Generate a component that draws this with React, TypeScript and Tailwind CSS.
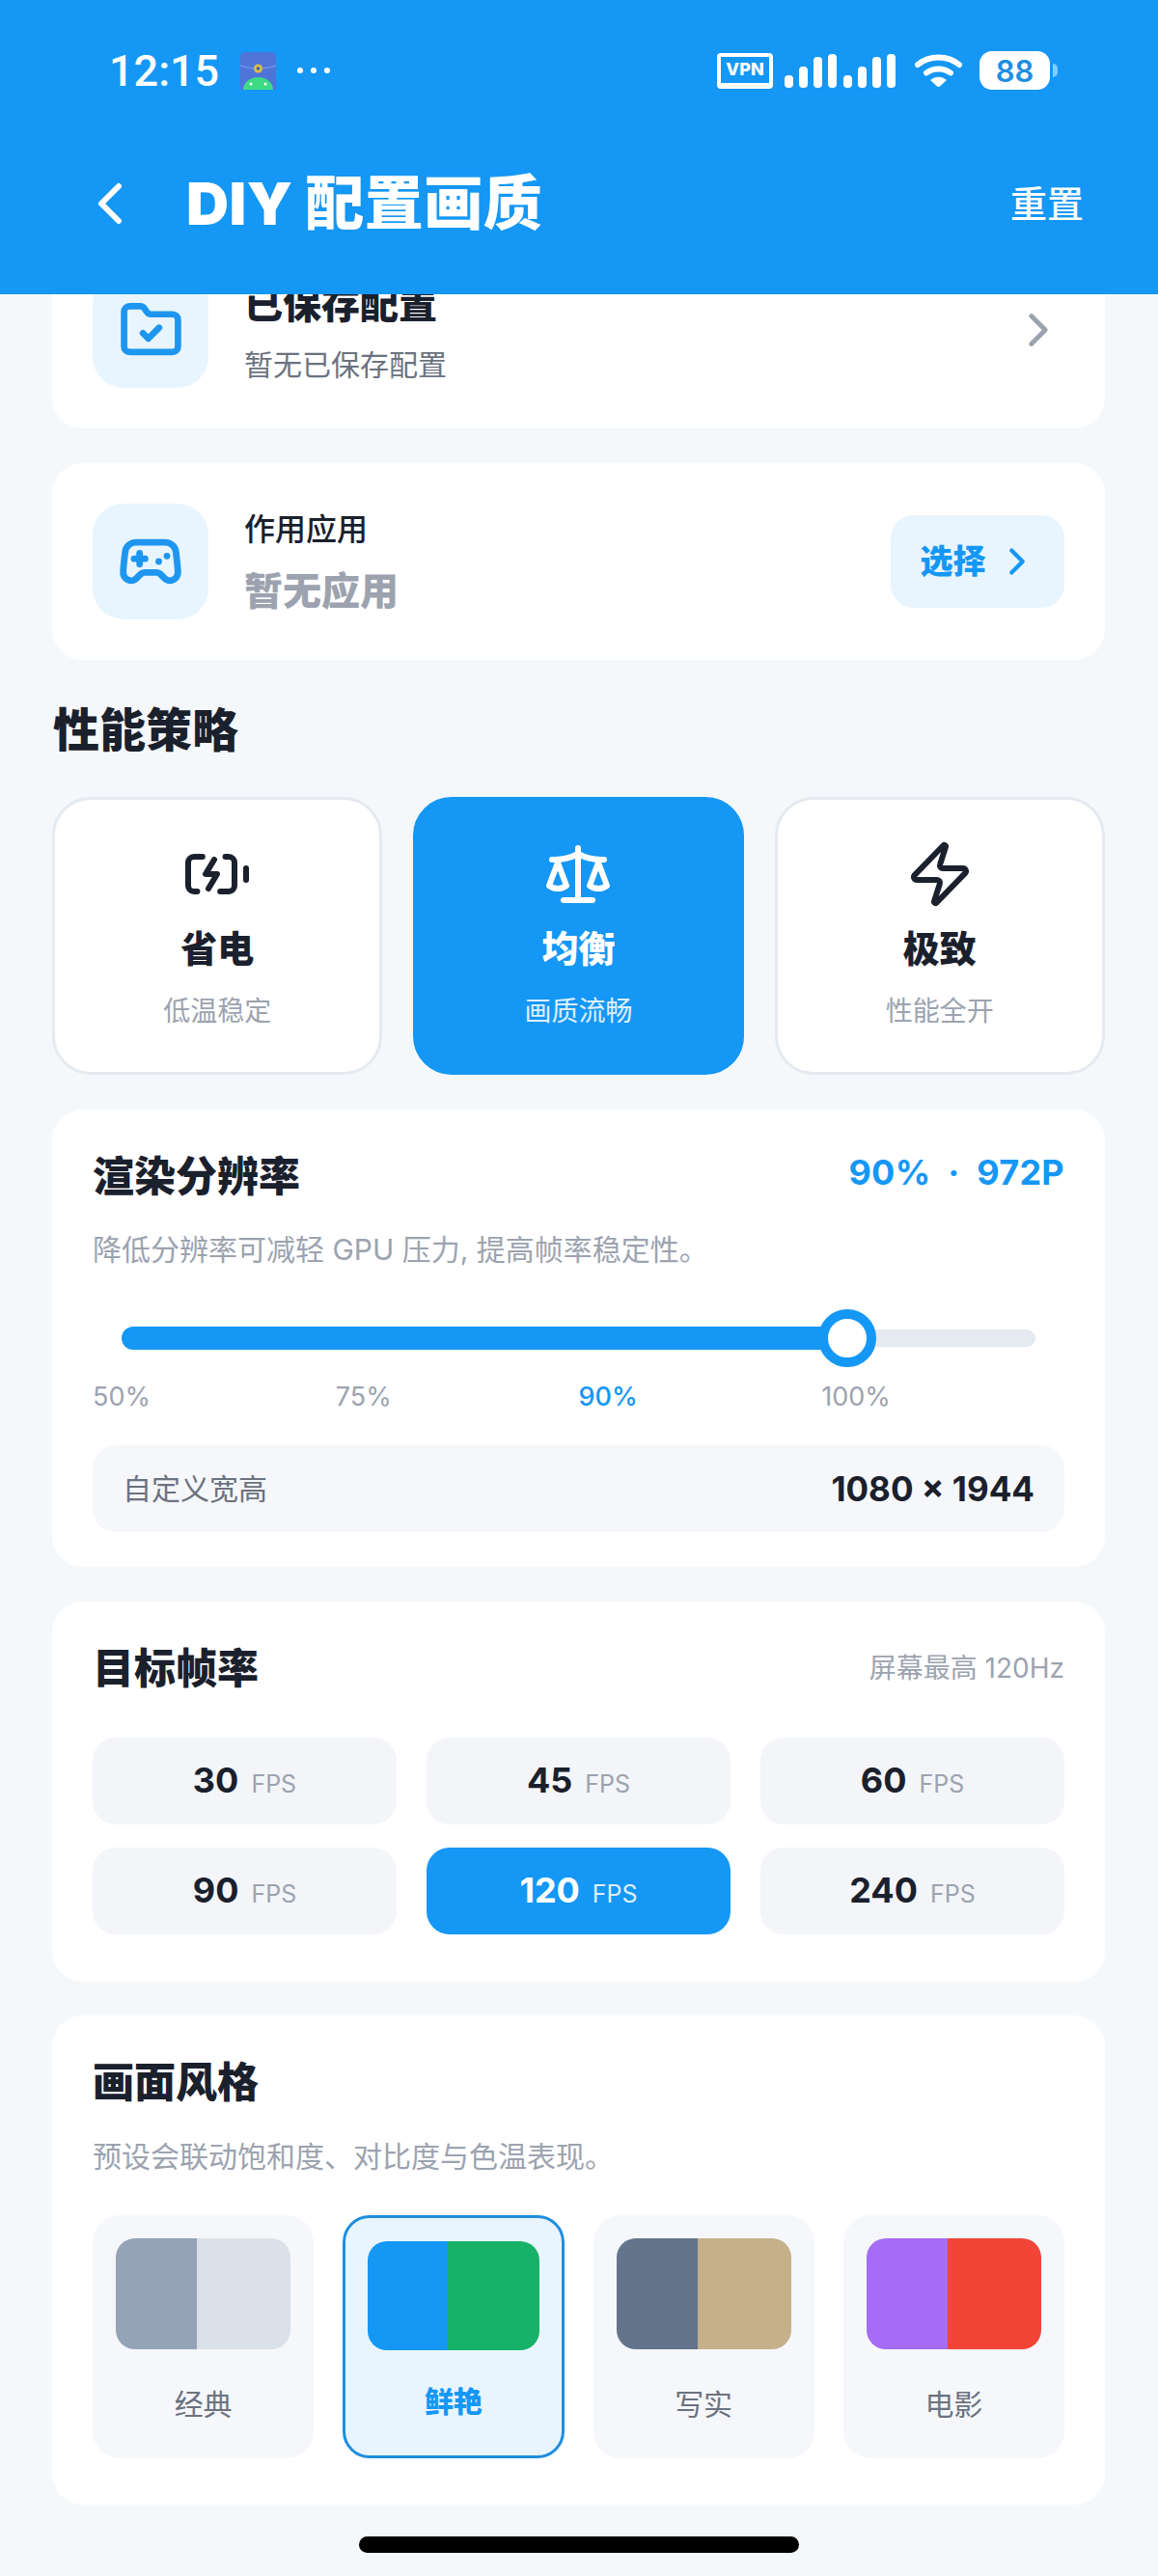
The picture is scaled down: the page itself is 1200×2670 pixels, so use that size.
import { BatteryCharging, ChevronLeft, ChevronRight, FolderCheck, Gamepad2, Scale, Zap } from "lucide-react";

const bars = [13, 22, 32, 35];

function SignalGroup() {
  return (
    <div className="flex items-end gap-[6px]">
      {bars.map((h) => (
        <div key={h} className="w-[9px] rounded-[4px] bg-white" style={{ height: h }} />
      ))}
    </div>
  );
}

function StatusBar() {
  return (
    <div className="flex h-[40px] items-center justify-between pl-[113px] pr-[104px]">
      <div className="flex items-center">
        <span className="font-['Roboto',sans-serif] text-[45px] font-medium leading-none text-white">12:15</span>
        <svg width="37" height="39" viewBox="0 0 37 39" className="ml-[22px]">
          <path d="M0 5a5 5 0 0 1 5-5h27a5 5 0 0 1 5 5v34H0z" fill="#4f74d8" />
          <path d="M0 14c11 4 26 4 37 0" stroke="#6c96ea" strokeWidth="1.500" fill="none" />
          <circle cx="18.500" cy="17" r="4.500" fill="#d9bd4a" />
          <circle cx="18.500" cy="17" r="1.800" fill="#45609f" />
          <path d="M3 39a15.500 13 0 0 1 31 0z" fill="#3ddc84" />
          <circle cx="11" cy="33" r="1.500" fill="#fff" />
          <circle cx="26" cy="33" r="1.500" fill="#fff" />
        </svg>
        <div className="ml-[22px] flex gap-[8px]">
          <div className="h-[6px] w-[6px] rounded-full bg-white" />
          <div className="h-[6px] w-[6px] rounded-full bg-white" />
          <div className="h-[6px] w-[6px] rounded-full bg-white" />
        </div>
      </div>
      <div className="flex items-center">
        <div className="flex h-[37px] w-[58px] items-center justify-center rounded-[4px] border-[4px] border-b-[6px] border-white text-[18px] font-extrabold leading-none text-white">
          VPN
        </div>
        <div className="ml-[12px] flex gap-[7px]">
          <SignalGroup />
          <SignalGroup />
        </div>
        <svg width="49" height="34" viewBox="0 0 49 34" className="ml-[20px]">
          <path d="M3 11C15 1 34 1 46 11" stroke="#fff" strokeWidth="6" strokeLinecap="round" fill="none" />
          <path d="M12 19.500C19 14 30 14 37 19.500" stroke="#fff" strokeWidth="6" strokeLinecap="round" fill="none" />
          <path d="M16 27c5-4.500 12-4.500 17 0l-6.500 6a3 3 0 0 1-4 0z" fill="#fff" />
        </svg>
        <div className="ml-[18px] flex h-[40px] w-[73px] items-center justify-center rounded-[13px] bg-white text-[31px] font-semibold leading-none text-[#1f8ee0]">
          88
        </div>
        <div className="ml-[3px] h-[14px] w-[5px] rounded-r-full bg-white/50" />
      </div>
    </div>
  );
}

function Header() {
  return (
    <header className="h-[305px] shrink-0 bg-[#1597f5] pt-[53px] text-white">
      <StatusBar />
      <div className="mt-[88px] flex h-[60px] items-center justify-between pl-[78px] pr-[77px]">
        <div className="flex items-center">
          <ChevronLeft size={72} strokeWidth={2} />
          <h1 className="ml-[43px] text-[61px] font-black leading-none tracking-[0.5px]">DIY 配置画质</h1>
        </div>
        <span className="text-[38px] font-medium leading-none">重置</span>
      </div>
    </header>
  );
}

function IconBox({ children }: { children: React.ReactNode }) {
  return (
    <div className="flex h-[120px] w-[120px] shrink-0 items-center justify-center rounded-[32px] bg-[#e8f5fe] text-[#1e96f0]">
      {children}
    </div>
  );
}

const modes = [
  { title: "省电", sub: "低温稳定", Icon: BatteryCharging, active: false },
  { title: "均衡", sub: "画质流畅", Icon: Scale, active: true },
  { title: "极致", sub: "性能全开", Icon: Zap, active: false },
];

function Modes() {
  return (
    <div className="mt-[44px] grid grid-cols-3 gap-[32px]">
      {modes.map(({ title, sub, Icon, active }) => (
        <div
          key={title}
          className={
            active
              ? "flex h-[288px] flex-col items-center rounded-[40px] border-[3px] border-[#1597f5] bg-[#1597f5] pt-[41px] text-white"
              : "flex h-[288px] flex-col items-center rounded-[40px] border-[3px] border-[#e5e9f0] bg-white pt-[41px] text-[#1a202c]"
          }
        >
          <Icon size={72} strokeWidth={2} />
          <div className="mt-[19px] text-[38px] font-black leading-[44px]">{title}</div>
          <div className={active ? "mt-[25px] text-[28px] leading-[36px] text-white/85" : "mt-[25px] text-[28px] leading-[36px] text-[#9ca3af]"}>
            {sub}
          </div>
        </div>
      ))}
    </div>
  );
}

function Resolution() {
  return (
    <section className="mt-[36px] h-[474px] rounded-[32px] bg-white px-[42px] pt-[48px]">
      <div className="flex items-center justify-between">
        <h2 className="text-[43px] font-black leading-[42px] text-[#1a202c]">渲染分辨率</h2>
        <span className="-mt-[8px] whitespace-pre text-[36px] font-bold leading-[42px] tracking-[0.3px] text-[#1597f5]">90%  ·  972P</span>
      </div>
      <p className="mt-[40px] text-[30px] leading-[30px] text-[#9ca3af]">降低分辨率可减轻 GPU 压力, 提高帧率稳定性。</p>
      <div className="mt-[47px] flex h-[60px] items-center pl-[30px] pr-[30px]">
        <div className="h-[24px] w-[740px] rounded-l-[12px] bg-[#1597f5]" />
        <div className="relative z-10 -ml-[18px] h-[60px] w-[60px] shrink-0 rounded-full border-[10px] border-[#1597f5] bg-white" />
        <div className="-ml-[20px] h-[18px] flex-1 rounded-r-[9px] bg-[#e5e9f0]" />
      </div>
      <div className="mt-[17px] grid grid-cols-4 text-[27px] leading-[28px] text-[#9ca3af]">
        <span>50%</span>
        <span>75%</span>
        <span className="font-medium text-[#1597f5]">90%</span>
        <span>100%</span>
      </div>
      <div className="mt-[36px] flex h-[90px] items-center justify-between rounded-[24px] bg-[#f5f7fa] px-[31px]">
        <span className="text-[30px] leading-none text-[#6b7280]">自定义宽高</span>
        <span className="text-[35px] font-bold leading-none text-[#1a202c]">1080 × 1944</span>
      </div>
    </section>
  );
}

const rates = [30, 45, 60, 90, 120, 240];

function FrameRate() {
  return (
    <section className="mt-[36px] h-[394px] rounded-[32px] bg-white px-[42px] pt-[48px]">
      <div className="flex items-center justify-between">
        <h2 className="text-[43px] font-black leading-[42px] text-[#1a202c]">目标帧率</h2>
        <span className="text-[28px] leading-[42px] text-[#9ca3af]">屏幕最高 120Hz</span>
      </div>
      <div className="mt-[51px] grid grid-cols-3 gap-x-[31px] gap-y-[24px]">
        {rates.map((r) => (
          <div
            key={r}
            className={
              r === 120
                ? "flex h-[90px] items-baseline justify-center gap-[13px] rounded-[24px] bg-[#1597f5] pt-[23px] text-white"
                : "flex h-[90px] items-baseline justify-center gap-[13px] rounded-[24px] bg-[#f3f5f9] pt-[23px] text-[#1a202c]"
            }
          >
            <span className="text-[36px] font-bold leading-[42px]">{r}</span>
            <span className={r === 120 ? "text-[25px] leading-[42px] text-white/85" : "text-[25px] leading-[42px] text-[#9ca3af]"}>FPS</span>
          </div>
        ))}
      </div>
    </section>
  );
}

const styles = [
  { name: "经典", a: "#94a3b8", b: "#dbe1e9" },
  { name: "鲜艳", a: "#1597f5", b: "#16b26a", active: true },
  { name: "写实", a: "#64748b", b: "#c5b08a" },
  { name: "电影", a: "#a56cf5", b: "#f24437" },
];

function Picture() {
  return (
    <section className="mt-[35px] h-[507px] rounded-[32px] bg-white px-[42px] pt-[48px]">
      <h2 className="text-[43px] font-black leading-[42px] text-[#1a202c]">画面风格</h2>
      <p className="mt-[41px] text-[30px] leading-[30px] text-[#9ca3af]">预设会联动饱和度、对比度与色温表现。</p>
      <div className="mt-[46px] grid grid-cols-4 gap-[30px]">
        {styles.map((s) =>
          s.active ? (
            <div key={s.name} className="flex h-[252px] flex-col items-center rounded-[28px] border-[3px] border-[#1f8ee0] bg-[#e8f5fe] px-[23px] pt-[24px]">
              <div className="flex h-[113px] w-full overflow-hidden rounded-[20px]">
                <div className="w-[46.500%]" style={{ background: s.a }} />
                <div className="flex-1" style={{ background: s.b }} />
              </div>
              <div className="mt-[35px] text-[30px] font-black leading-[36px] text-[#1597f5]">{s.name}</div>
            </div>
          ) : (
            <div key={s.name} className="flex h-[252px] flex-col items-center rounded-[28px] bg-[#f5f7fa] px-[24px] pt-[24px]">
              <div className="flex h-[115px] w-full overflow-hidden rounded-[20px]">
                <div className="w-[46.500%]" style={{ background: s.a }} />
                <div className="flex-1" style={{ background: s.b }} />
              </div>
              <div className="mt-[39px] text-[30px] leading-[36px] text-[#6b7280]">{s.name}</div>
            </div>
          )
        )}
      </div>
    </section>
  );
}

export default function App() {
  return (
    <div className="relative flex h-[2670px] w-[1200px] flex-col overflow-hidden bg-[#f5f8fb] font-['Inter','Noto_Sans_CJK_SC',sans-serif]">
      <Header />
      <main className="min-h-0 flex-1 overflow-hidden pl-[54px] pr-[55px]">
        <div className="-mt-[65px]">
          <section className="flex h-[204px] items-center rounded-[32px] bg-white px-[42px]">
            <IconBox>
              <FolderCheck size={67} strokeWidth={2.4} />
            </IconBox>
            <div className="ml-[37px] flex-1 pt-[6px]">
              <div className="text-[40px] font-black leading-[44px] text-[#1a202c]">已保存配置</div>
              <div className="mt-[22px] text-[30px] leading-[36px] text-[#6b7280]">暂无已保存配置</div>
            </div>
            <ChevronRight size={58} strokeWidth={2} className="mr-[-2px] text-[#9ca3af]" />
          </section>
          <section className="mt-[36px] flex h-[204px] items-center rounded-[32px] bg-white px-[42px]">
            <IconBox>
              <Gamepad2 size={68} strokeWidth={2.4} />
            </IconBox>
            <div className="ml-[37px] flex-1">
              <div className="text-[32px] font-medium leading-[38px] text-[#1a202c]">作用应用</div>
              <div className="mt-[23px] text-[40px] font-black leading-[44px] text-[#9ca3af]">暂无应用</div>
            </div>
            <div className="flex h-[96px] w-[180px] items-center justify-center rounded-[24px] bg-[#e8f5fe] pl-[4px] text-[#1597f5]">
              <span className="text-[34px] font-black leading-none">选择</span>
              <ChevronRight size={46} strokeWidth={2.2} className="ml-[9px]" />
            </div>
          </section>
          <h2 className="mt-[48px] pl-[1px] text-[48px] font-black leading-[50px] text-[#1a202c]">性能策略</h2>
          <Modes />
          <Resolution />
          <FrameRate />
          <Picture />
        </div>
      </main>
      <div className="absolute bottom-[24px] left-[372px] h-[17px] w-[456px] rounded-full bg-black" />
    </div>
  );
}
